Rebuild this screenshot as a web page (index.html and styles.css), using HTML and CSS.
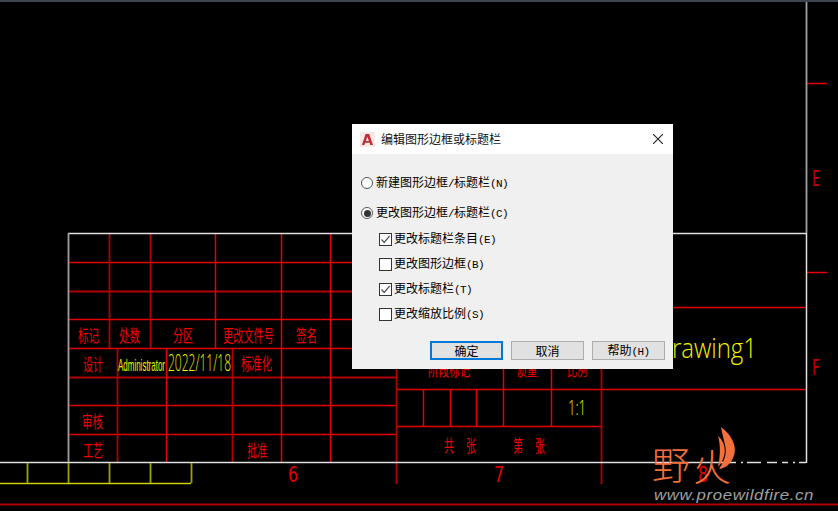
FILE: index.html
```html
<!DOCTYPE html>
<html lang="zh">
<head>
<meta charset="utf-8">
<title>编辑图形边框或标题栏</title>
<link rel="stylesheet" href="styles.css">
</head>
<body>
<main class="stage">
  <svg class="drawing" width="838" height="511" viewBox="0 0 838 511" aria-label="CAD drawing">
    <rect class="topstrip" x="0" y="0" width="838" height="2"/>
    <!-- title block grid -->
    <path class="red" d="M69 262.5H396M69 319.5H396M69 348.5H396M69 405.5H396M69 434.5H396M396 389.5H806M396 426.5H601M673 307.5H806M673 389.5H806"/>
    <path class="dark" d="M69 291.5H396M69 377.5H396"/>
    <path class="red" d="M215.5 234V348M281.5 234V462M330.5 234V462M166.5 348V462M423.5 389V426M476.5 389V426M503.5 369V426M551.5 369V426M450.5 389V426"/>
    <path class="dark" d="M109.5 234V348M150.5 234V348M117.5 348V462M232.5 348V462M396.5 369V484M601.5 369V484"/>
    <path class="red" d="M806 83.5H827M806 272.5H827"/>
    <path class="dark" d="M0 504.5H838"/>
    <!-- borders -->
    <path class="white" d="M68 233.5H806M0 462.5H730"/>
    <path class="white dashes" d="M730 462.5H806"/>
    <path class="white" d="M806.5 233V463"/>
    <path class="grey" d="M68.5 233V462M806.5 2V233"/>
    <!-- zone boxes -->
    <path class="yellow" d="M0 483.5H191"/>
    <path class="olive" d="M27.5 463V483M68.5 463V483M109.5 463V483M150.5 463V483M191.5 463V483"/>
    <!-- labels -->
    <g class="cad">
      <text x="78" y="342" textLength="21" lengthAdjust="spacingAndGlyphs">标记</text>
      <text x="119" y="342" textLength="21" lengthAdjust="spacingAndGlyphs">处数</text>
      <text x="173" y="342" textLength="20" lengthAdjust="spacingAndGlyphs">分区</text>
      <text x="223" y="342" textLength="51" lengthAdjust="spacingAndGlyphs">更改文件号</text>
      <text x="296" y="342" textLength="21" lengthAdjust="spacingAndGlyphs">签名</text>
      <text x="83" y="371" textLength="20" lengthAdjust="spacingAndGlyphs">设计</text>
      <text x="241" y="370" textLength="31" lengthAdjust="spacingAndGlyphs">标准化</text>
      <text x="82" y="428" textLength="21" lengthAdjust="spacingAndGlyphs">审核</text>
      <text x="83" y="457" textLength="20" lengthAdjust="spacingAndGlyphs">工艺</text>
      <text x="247" y="457" textLength="20" lengthAdjust="spacingAndGlyphs">批准</text>
      <text x="428" y="376" textLength="42" lengthAdjust="spacingAndGlyphs">阶段标记</text>
      <text x="517" y="376" textLength="20" lengthAdjust="spacingAndGlyphs">质量</text>
      <text x="567" y="376" textLength="20" lengthAdjust="spacingAndGlyphs">比例</text>
      <text x="444" y="452" textLength="10" lengthAdjust="spacingAndGlyphs">共</text>
      <text x="466" y="452" textLength="10" lengthAdjust="spacingAndGlyphs">张</text>
      <text x="513" y="452" textLength="10" lengthAdjust="spacingAndGlyphs">第</text>
      <text x="535" y="452" textLength="10" lengthAdjust="spacingAndGlyphs">张</text>
    </g>
    <g class="zone">
      <text x="288" y="482" textLength="10" lengthAdjust="spacingAndGlyphs">6</text>
      <text x="494" y="482" textLength="10" lengthAdjust="spacingAndGlyphs">7</text>
      <text x="698" y="482" textLength="10" lengthAdjust="spacingAndGlyphs">8</text>
      <text class="dimzone" x="812" y="186" textLength="8" lengthAdjust="spacingAndGlyphs">E</text>
      <text class="dimzone" x="812" y="375" textLength="8" lengthAdjust="spacingAndGlyphs">F</text>
    </g>
    <g class="val">
      <text class="admin" x="118" y="371" textLength="47" lengthAdjust="spacingAndGlyphs">Administrator</text>
      <text class="date" x="168" y="371" textLength="63" lengthAdjust="spacingAndGlyphs">2022/11/18</text>
      <text class="scale" x="568" y="415" textLength="18" lengthAdjust="spacingAndGlyphs">1:1</text>
      <text class="dwg" x="655" y="358" textLength="102" lengthAdjust="spacingAndGlyphs">Drawing1</text>
    </g>
    <!-- watermark -->
    <g class="mark">
      <text class="markcn" x="652" y="479">野</text>
      <text class="markcn" x="693" y="481">火</text>
      <path class="flame" d="M721 427C733 436 738 448 733 458C730 465 725 468 719 469C725 461 727 452 725 445C724 440 722 433 721 427ZM718 436C724 441 726 449 724 456C723 460 721 464 718 467C720 458 721 446 718 436Z"/>
      <text class="url" x="654" y="500" textLength="160" lengthAdjust="spacingAndGlyphs">www.proewildfire.cn</text>
    </g>
  </svg>

  <section class="dialog" aria-label="编辑图形边框或标题栏">
    <header class="titlebar">
      <svg class="appicon" width="15" height="15" viewBox="0 0 15 15" aria-hidden="true">
        <rect class="appicon-bg" width="15" height="15"/>
        <path class="appicon-a" fill-rule="evenodd" d="M5.6 2H9.2L13 13H10.3L9.6 10.8H5.1L4.4 13H1.9ZM7.4 4.8 5.8 8.9H8.9Z"/>
      </svg>
      <h1 class="title">编辑图形边框或标题栏</h1>
      <svg class="close" width="10" height="10" viewBox="0 0 10 10" aria-hidden="true">
        <path d="M0 0 10 10M10 0 0 10"/>
      </svg>
    </header>
    <div class="body">
      <div class="option radio-row"><span class="radio"></span><span>新建图形边框<span class="a">/</span>标题栏<span class="a">(N)</span></span></div>
      <div class="option radio-row"><span class="radio on"></span><span>更改图形边框<span class="a">/</span>标题栏<span class="a">(C)</span></span></div>
      <div class="checks">
        <div class="option"><span class="check"><svg width="11" height="11" viewBox="0 0 11 11" aria-hidden="true"><path d="M1.5 5.5 4.2 8.5 9.7 1.8"/></svg></span><span>更改标题栏条目<span class="a">(E)</span></span></div>
        <div class="option"><span class="check"></span><span>更改图形边框<span class="a">(B)</span></span></div>
        <div class="option"><span class="check"><svg width="11" height="11" viewBox="0 0 11 11" aria-hidden="true"><path d="M1.5 5.5 4.2 8.5 9.7 1.8"/></svg></span><span>更改标题栏<span class="a">(T)</span></span></div>
        <div class="option"><span class="check"></span><span>更改缩放比例<span class="a">(S)</span></span></div>
      </div>
      <div class="buttons">
        <button class="btn primary">确定</button>
        <button class="btn">取消</button>
        <button class="btn">帮助<span class="a">(H)</span></button>
      </div>
    </div>
  </section>
</main>
</body>
</html>
```
FILE: styles.css
```css
html, body { margin: 0; padding: 0; background: #000; }
.stage { position: relative; width: 838px; height: 511px; overflow: hidden; background: #000; }
.drawing { display: block; }
.drawing path { fill: none; stroke-width: 1.5; }
.topstrip { fill: #3c4452; }
.drawing .red { stroke: #e60000; }
.drawing .dark { stroke: #b00000; stroke-width: 1.8; }
.drawing .white { stroke: #e0e0e0; }
.drawing .dashes { stroke-dasharray: 6 5 2 4 14 6 10 5; }
.drawing .grey { stroke: #a0a0a0; stroke-width: 1.8; }
.drawing .yellow { stroke: #d0d000; }
.drawing .olive { stroke: #a0a000; stroke-width: 1.8; }
.cad text { font-family: "Noto Sans CJK SC", sans-serif; font-size: 17px; fill: #f00000; }
.zone text { font-family: "DejaVu Sans", sans-serif; font-size: 21px; fill: #e00000; }
.zone .dimzone { fill: #c00000; }
.val text { font-family: "Open Sans", sans-serif; font-weight: 300; fill: #f0f000; }
.val .admin { font-family: "Liberation Sans", sans-serif; font-weight: 400; font-size: 17px; }
.val .date { font-size: 23px; }
.val .scale { font-size: 20px; }
.val .dwg { font-size: 28px; }
.markcn { font-family: "Noto Sans CJK SC", sans-serif; font-size: 38px; font-weight: 300; fill: #f4703a; }
.drawing .flame { fill: #f4703a; stroke: none; }
.url { font-family: "Liberation Sans", sans-serif; font-style: italic; font-size: 14px; fill: #a0a0a0; letter-spacing: .5px; }

.dialog {
  position: absolute; left: 352px; top: 124px; width: 321px; height: 245px;
  display: flex; flex-direction: column; background: #f0f0f0; color: #000;
  font-family: "Noto Sans CJK SC", sans-serif; font-size: 12px;
}
.titlebar { flex: none; height: 30px; background: #fff; display: flex; align-items: center; padding: 0 10px 0 8px; }
.appicon { flex: none; }
.appicon-bg { fill: #f8e9e6; }
.appicon .appicon-a { fill: #bb2f38; stroke: none; }
.title { flex: 1; margin: 0 0 0 6px; font-size: 12px; font-weight: 400; line-height: 16px; color: #111; }
.close { flex: none; }
.close path { fill: none; stroke: #222; stroke-width: 1.1; }
.body { flex: 1; display: flex; flex-direction: column; padding: 20px 8px 9px 9px; }
.option { display: flex; align-items: center; height: 18px; line-height: 18px; gap: 2px; white-space: nowrap; }
.radio-row { margin-bottom: 12px; gap: 3px; }
.a { font-family: "Liberation Mono", monospace; font-size: 11px; letter-spacing: -.6px; }
.radio { flex: none; box-sizing: border-box; width: 12px; height: 12px; border: 1px solid #555; border-radius: 50%; background: #fff; display: flex; align-items: center; justify-content: center; }
.radio.on::after { content: ""; width: 7px; height: 7px; border-radius: 50%; background: #333; }
.checks { display: flex; flex-direction: column; gap: 7px; margin: -4px 0 0 18px; }
.check { flex: none; box-sizing: border-box; width: 13px; height: 13px; border: 1px solid #333; background: #fff; display: flex; align-items: center; justify-content: center; }
.check path { fill: none; stroke: #555; stroke-width: 1.3; }
.buttons { display: flex; gap: 8px; margin-top: 18px; padding-left: 69px; }
.btn {
  box-sizing: border-box; width: 73px; height: 19px; padding: 0; border: 1px solid #adadad;
  background: #e1e1e1; color: #000; font-family: "Noto Sans CJK SC", sans-serif; font-size: 12px; line-height: 15px;
}
.btn.primary { border: 2px solid #0078d7; }
```
